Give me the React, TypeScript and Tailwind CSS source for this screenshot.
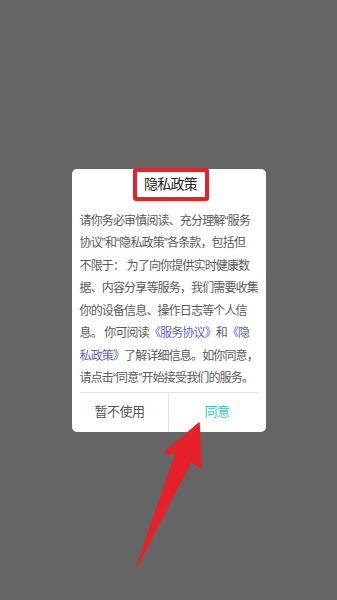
import React from 'react';

const font = { fontFamily: '"Liberation Sans", "Noto Sans CJK SC", sans-serif' };

export default function App() {
  return (
    <div className="relative w-full h-[600px] bg-[#656565] flex items-center justify-center" style={font}>
      <div className="w-[194px] bg-white rounded-[5px] flex flex-col">
        <div className="flex justify-center -mt-px">
          <span className="ml-[4px] h-[33px] w-[76px] border-4 border-[#e8202a] rounded-[3px] flex items-center justify-center text-[14px] tracking-[-0.8px] text-[#222]">
            隐私政策
          </span>
        </div>

        <p className="px-[8px] pt-[9px] text-[12px] leading-[22.5px] tracking-[-0.85px] text-[#5a5a5a] whitespace-nowrap">
          请你务必审慎阅读、充分理解“服务<br />
          协议”和“隐私政策”各条款，包括但<br />
          不限于： 为了向你提供实时健康数<br />
          据、内容分享等服务，我们需要收集<br />
          你的设备信息、操作日志等个人信<br />
          息。 你可阅读<span className="text-[#5b5fd9]">《服务协议》</span>和<span className="text-[#5b5fd9]">《隐<br />
          私政策》</span>了解详细信息。如你同意，<br />
          请点击“同意”开始接受我们的服务。
        </p>

        <div className="mx-[8px] mt-[2px] border-t border-[#e3e3e3]" />

        <div className="grid grid-cols-2 h-[39px] text-[13px]">
          <button className="border-r border-[#e3e3e3] text-[#555] tracking-[-0.5px]">暂不使用</button>
          <button className="text-[#3ec6c2] tracking-[-0.5px]">同意</button>
        </div>
      </div>

      <svg className="absolute inset-0 w-full h-full pointer-events-none" viewBox="0 0 337 600">
        <polygon
          points="199,423 201,468 191,461 137,566 176,453 164,453"
          fill="#e8202a"
          stroke="#e8202a"
          strokeWidth="1.5"
          strokeLinejoin="round"
        />
      </svg>
    </div>
  );
}
